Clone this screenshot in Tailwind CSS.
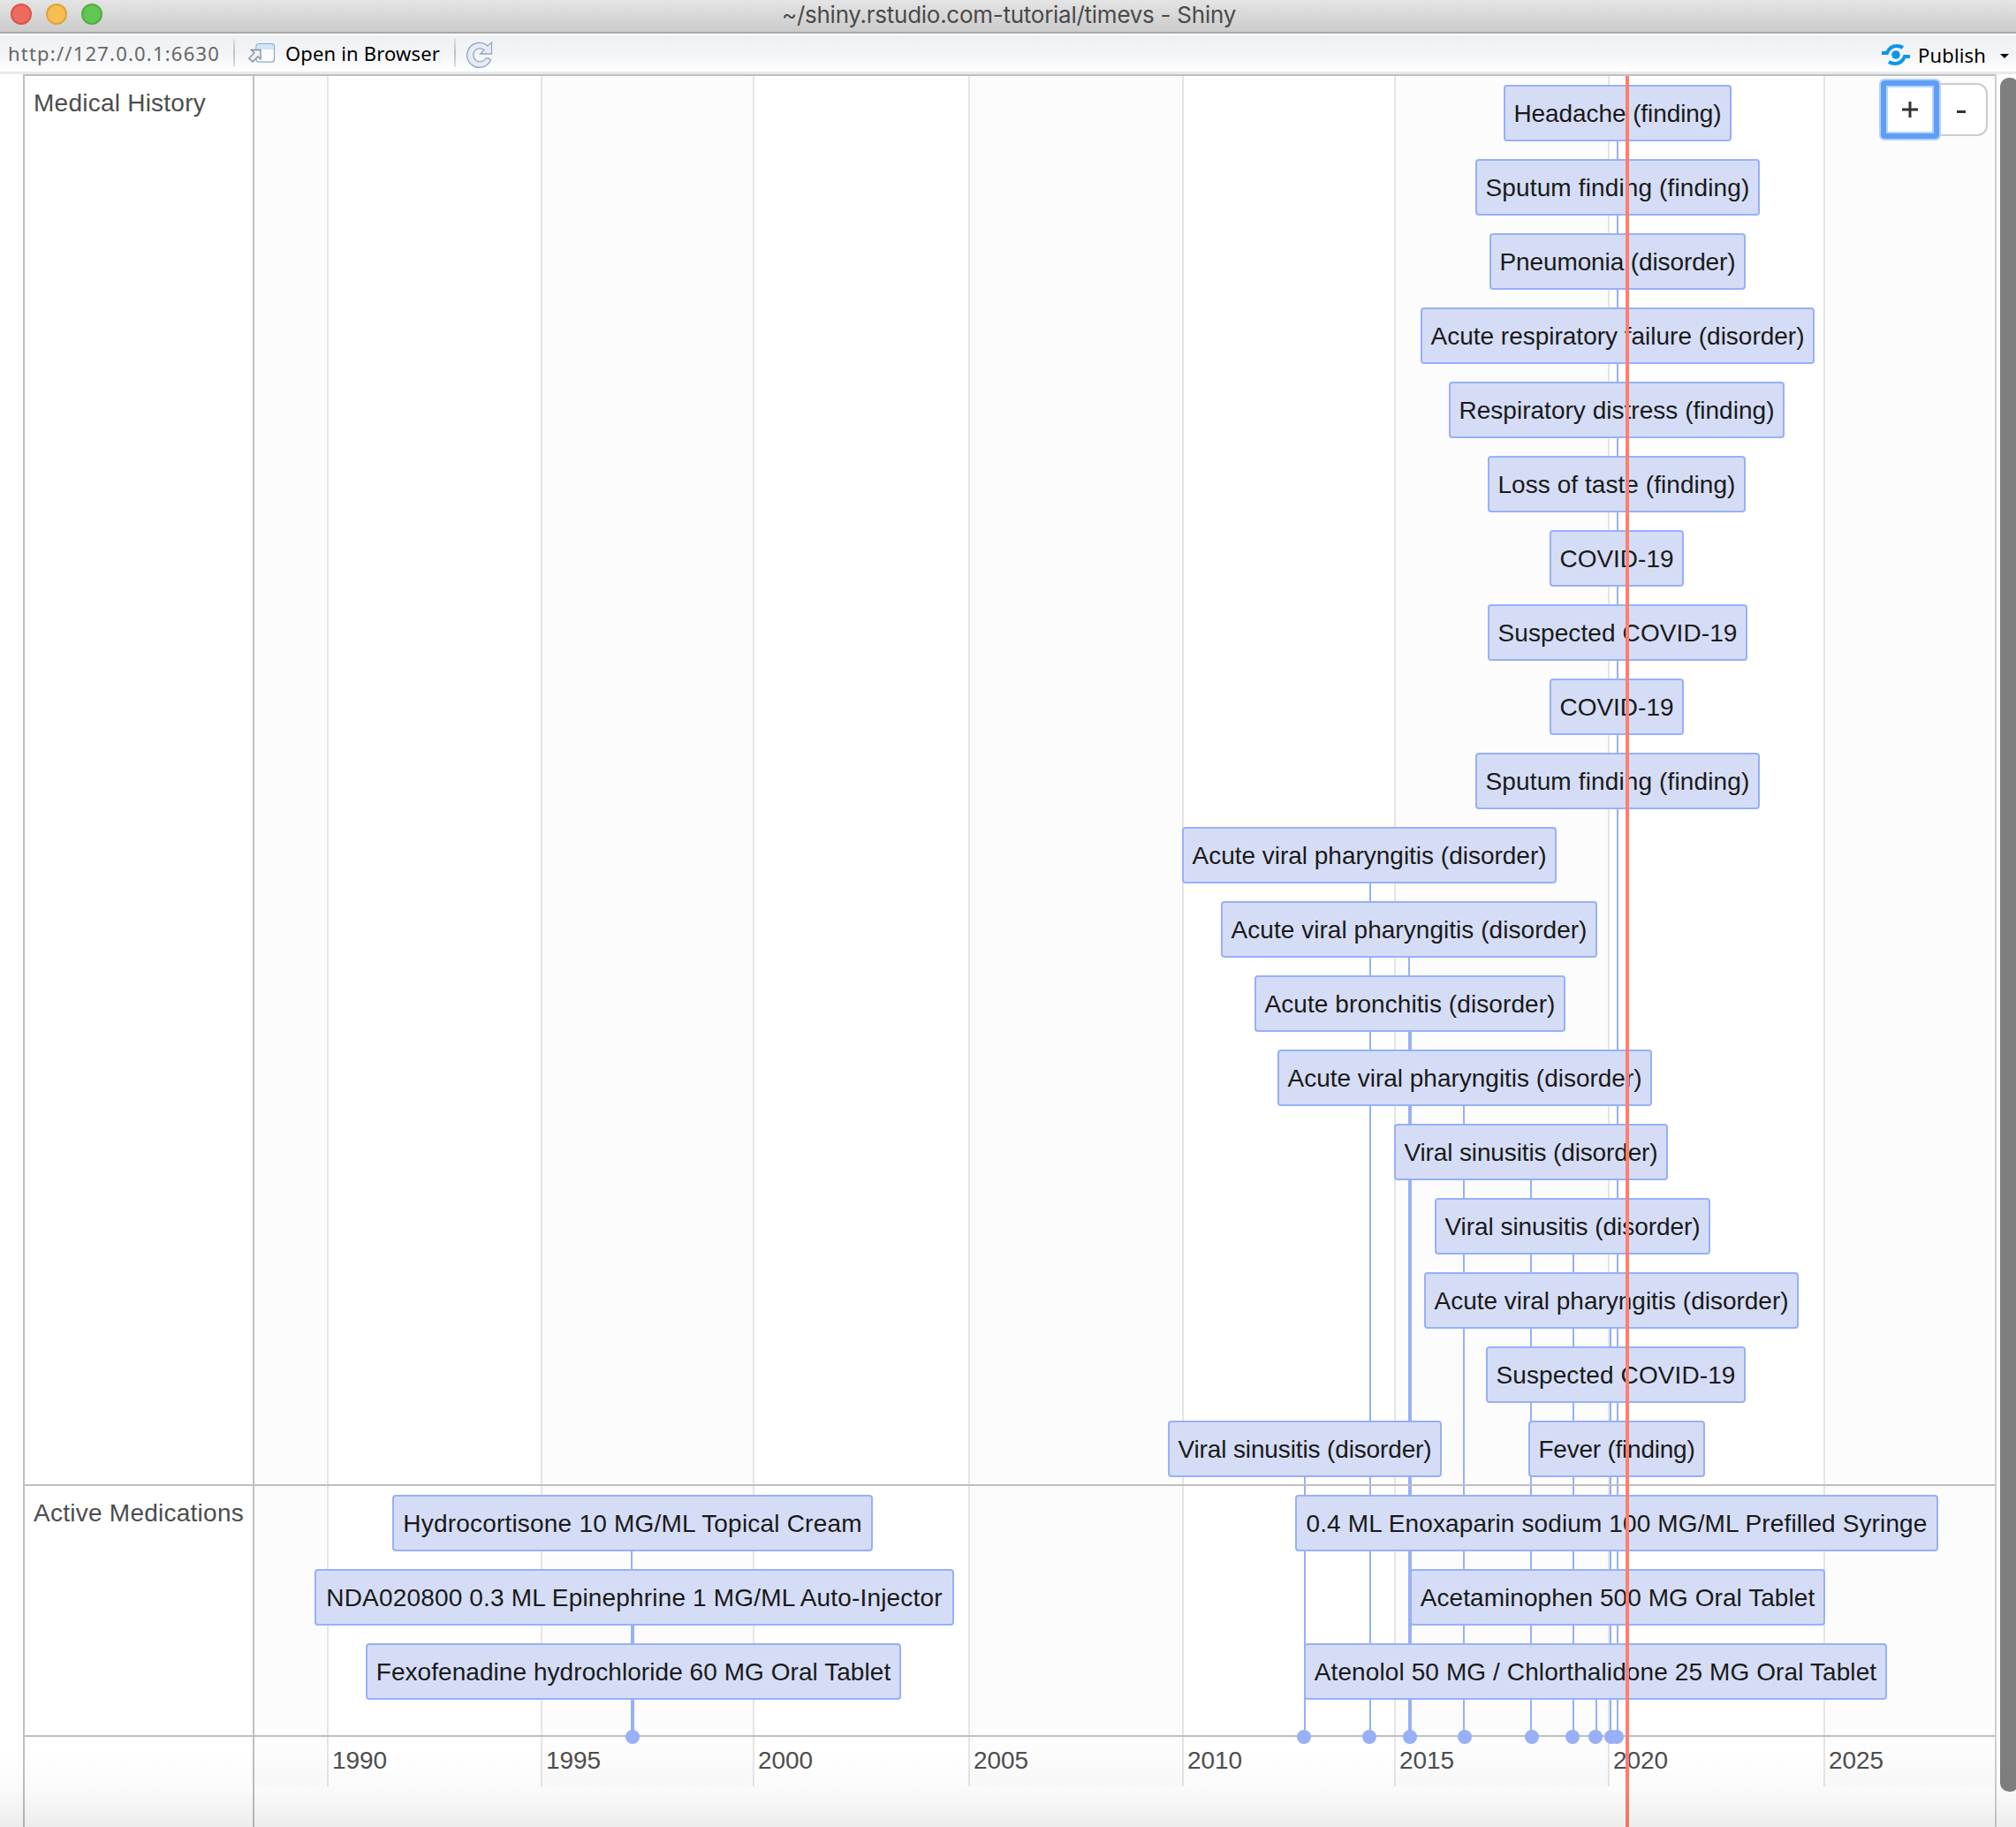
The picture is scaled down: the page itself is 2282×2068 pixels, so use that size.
<!DOCTYPE html>
<html lang="en">
<head>
<meta charset="utf-8">
<title>~/shiny.rstudio.com-tutorial/timevs - Shiny</title>
<script src="https://cdn.jsdelivr.net/npm/@tailwindcss/browser@4"></script>
</head>
<body class="w-[2282px] h-[2068px] overflow-hidden bg-white flex flex-col font-['Liberation_Sans',sans-serif] text-[28px]">
  <header class="h-[38px] shrink-0 relative flex items-center px-3 gap-4 bg-linear-to-b from-[#e4e4e4] to-[#cbcbcb] border-b-2 border-[#a8a8a8]">
    <span class="size-6 -mt-1 rounded-full bg-[#ed6a5f] border-2 border-[#dc5449]"></span>
    <span class="size-6 -mt-1 rounded-full bg-[#f6be50] border-2 border-[#dba53c]"></span>
    <span class="size-6 -mt-1 rounded-full bg-[#62c655] border-2 border-[#51ad42]"></span>
    <h1 class="grow flex justify-center pr-[118px] -mt-[2px] text-[26px] leading-8 font-['Inter',sans-serif] text-[#4a4a4a]"><span data-w="514" data-font="26px Inter">~/shiny.rstudio.com-tutorial/timevs - Shiny</span></h1>
  </header>
  <nav class="h-[46px] shrink-0 flex items-center pl-[9px] pr-2 pb-[1px] bg-linear-to-b from-[#eef1f3] via-[#f3f4f7] to-white border-t-2 border-t-white border-b-3 border-b-[#e9e9f0] font-['Noto_Sans',sans-serif] text-[22px] leading-8 text-black">
    <span class="w-[240px] text-[#666]"><span data-w="240" data-font="22px Noto Sans">http://127.0.0.1:6630</span></span>
    <span class="w-[2px] h-8 ml-[15px] bg-linear-to-b from-[#e0e1e3] via-[#bfc0c2] to-[#e0e1e3]"></span>
    <svg class="w-8 h-8 ml-[15px] shrink-0" viewBox="0 0 32 32" fill="none">
      <rect x="9" y="5.600" width="20.500" height="20.500" rx="3" fill="#fbfcfe" stroke="#8fabc6" stroke-width="1.300"/>
      <path d="M9.700 12V9q0-2.700 2.700-2.700h13.700q2.700 0 2.700 2.700v3z" fill="#cde6fb"/>
      <path d="M3.500 12.500H14V23l-3-3-6 6L.8 22l6-6z" fill="#eef0f6" stroke="#7d8aa0" stroke-width="1.300"/>
    </svg>
    <span class="ml-[10px] w-[176px] shrink-0"><span data-w="175" data-font="22px Noto Sans">Open in Browser</span></span>
    <span class="w-[2px] h-8 ml-[15px] bg-linear-to-b from-[#e0e1e3] via-[#bfc0c2] to-[#e0e1e3]"></span>
    <svg class="w-8 h-8 ml-3 mt-[4px] shrink-0" viewBox="0 0 32 32"><path d="M28.500 2V15H15.500L20 10.500A7.500 7.500 0 1 0 21.500 20.500Q25 18.500 27.500 22A14 14 0 1 1 24 6Z" fill="#e4ebfa" stroke="#9aa5b8" stroke-width="1.300"/></svg>
    <span class="grow"></span>
    <svg class="w-8 h-6 mr-[9px] mt-[4px] shrink-0" viewBox="0 0 32 24" fill="none" stroke="#0c96ea" stroke-width="4"><path d="M0 10h6c2-5 6-8 11-8q4 0 7 2M32 14h-6c-2 5-6 8-11 8q-4 0-7-2"/><circle cx="16" cy="12" r="4.800" fill="#0c96ea" stroke="none"/></svg>
    <span class="w-[77px] pt-[3px] shrink-0"><span data-w="77" data-font="22px Noto Sans">Publish</span></span>
    <span class="ml-[16px] mt-[7px] border-x-[5px] border-x-transparent border-t-[5px] border-t-black"></span>
  </nav>
  <main id="timeline" class="relative grow"></main>
<script>
const root = document.getElementById('timeline');
const TOP = 84;
function box(cls, x, y, w, h) {
  const e = document.createElement('div');
  e.className = 'absolute ' + cls;
  e.style.left = x + 'px'; e.style.top = (y - TOP) + 'px';
  if (w) e.style.width = w + 'px';
  if (h) e.style.height = h + 'px';
  root.append(e);
  return e;
}
function label(cls, x, y, text, w) {
  const e = box('whitespace-nowrap leading-8 text-[#4d4d4d] ' + cls, x, y);
  e.innerHTML = '<span data-w="' + w + '">' + text + '</span>';
}
const years = [370, 612, 852, 1096, 1338, 1578, 1820, 2064];
[288].concat(years).forEach((x, i) => { if (i % 2 === 0) box('bg-[#fcfcfc]', x, 86, (years[i] || 2258) - x, 1936); });
years.forEach((x, i) => {
  box('bg-[#e5e5e5]', x, 86, 2, 1936);
  label('', x + 6, 1977, 1990 + i * 5, 62);
});
// stems: x, top, width
[[1830,160,2],[1550,1000,2],[1594,1084,2],[1594,1168,4],[1656,1252,2],[1732,1336,2],[1780,1420,2],[1822,1504,2],[1806,1924,2],[1476,1672,2],[714,1756,2],[714,1840,4]]
  .forEach(([x, y, w]) => box('bg-[#97b0f8]', x, y, w, 1964 - y));
// frame
box('bg-[#bfbfbf]', 26, 84, 2234, 2);
box('bg-[#bfbfbf]', 26, 84, 2, 1984);
box('bg-[#bfbfbf]', 286, 84, 2, 1984);
box('bg-[#cfcfcf]', 2258, 84, 2, 1984);
box('bg-[#bfbfbf]', 26, 1680, 2232, 2);
box('bg-[#bfbfbf]', 26, 1964, 2232, 2);
[1468,1542,1588,1650,1726,1772,1798,1816,1822,708].forEach(x => box('bg-[#97b0f8] rounded-full', x, 1958, 16, 16));
label('', 38, 101, 'Medical History', 195);
label('', 38, 1697, 'Active Medications', 238);
// items: left, right, row top, label
const A = 'Acute viral pharyngitis (disorder)', V = 'Viral sinusitis (disorder)', S = 'Sputum finding (finding)';
[[1702,1960,96,'Headache (finding)'],[1670,1992,180,S],[1686,1976,264,'Pneumonia (disorder)'],
 [1608,2054,348,'Acute respiratory failure (disorder)'],[1640,2020,432,'Respiratory distress (finding)'],
 [1684,1976,516,'Loss of taste (finding)'],[1754,1906,600,'COVID-19'],[1684,1978,684,'Suspected COVID-19'],
 [1754,1906,768,'COVID-19'],[1670,1992,852,S],[1338,1762,936,A],[1382,1808,1020,A],
 [1420,1772,1104,'Acute bronchitis (disorder)'],[1446,1870,1188,A],[1578,1888,1272,V],[1624,1936,1356,V],
 [1612,2036,1440,A],[1682,1976,1524,'Suspected COVID-19'],[1322,1632,1608,V],[1730,1930,1608,'Fever (finding)'],
 [444,988,1692,'Hydrocortisone 10 MG/ML Topical Cream'],[356,1080,1776,'NDA020800 0.3 ML Epinephrine 1 MG/ML Auto-Injector'],
 [414,1020,1860,'Fexofenadine hydrochloride 60 MG Oral Tablet'],[1466,2194,1692,'0.4 ML Enoxaparin sodium 100 MG/ML Prefilled Syringe'],
 [1596,2066,1776,'Acetaminophen 500 MG Oral Tablet'],[1476,2136,1860,'Atenolol 50 MG / Chlorthalidone 25 MG Oral Tablet']
].forEach(([l, r, y, t]) => {
  const e = box('flex justify-center items-center pt-[2px] border-2 border-[#97b0f8] bg-[#d5ddf6] rounded-[4px] text-[#1a1a1a] whitespace-nowrap leading-8', l, y, r - l, 64);
  e.innerHTML = '<span data-w="' + (r - l - 23) + '">' + t + '</span>';
});
box('bg-[#ff7f6e]', 1840, 86, 4, 1982);
// zoom buttons
box('border-2 border-[#ccc] rounded-r-[12px] bg-white flex items-center justify-center', 2190, 94, 60, 60).innerHTML = '<span class="w-[10px] h-[3px] mt-[5px] bg-[#333]"></span>';
box('bg-white border-2 border-[#ccc] rounded-l-[12px]', 2132, 94, 60, 60);
box('border-6 border-[#5e9ef4] outline-2 outline-[#b3d2fb] rounded-[4px] shadow-[inset_0_0_0_2px_#b7d4fb] flex items-center justify-center', 2129, 91, 66, 66).innerHTML = '<svg class="size-[18px] mb-px" viewBox="0 0 18 18" stroke="#333" stroke-width="3"><path d="M0 9h18M9 0v18"/></svg>';
box('bg-[#7f7f7f] rounded-l-[10px] rounded-r-[8px]', 2264, 88, 20, 1940);
box('bg-linear-to-b from-black/0 via-black/2 to-black/7', 0, 1984, 2282, 84);
// fit each label's tracking to its item width
const pen = document.createElement('canvas').getContext('2d');
document.querySelectorAll('[data-w]').forEach(s => {
  const [size, ...name] = (s.dataset.font || '28px Liberation Sans').split(' ');
  pen.font = size + ' "' + name.join(' ') + '"';
  s.style.whiteSpace = 'nowrap';
  s.style.fontVariantLigatures = 'none';
  const t = s.textContent;
  s.style.letterSpacing = ((s.dataset.w - pen.measureText(t).width) / t.length).toFixed(3) + 'px';
});
</script>
</body>
</html>
